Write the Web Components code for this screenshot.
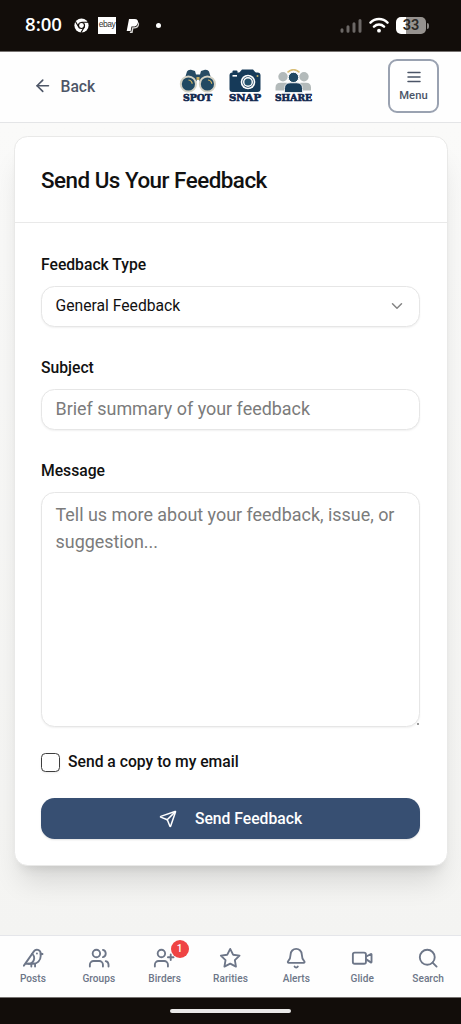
<!DOCTYPE html>
<html lang="en">
<head>
<meta charset="utf-8">
<title>Send Us Your Feedback</title>
<style>
html, body { margin: 0; height: 100%; }
body { font-family: Roboto, "Liberation Sans", sans-serif; color: #111; overflow: hidden; background: #120d0a; }
</style>
</head>
<body>
<feedback-app></feedback-app>
<script>
const define = (name, html) => {
  const t = document.createElement('template');
  t.innerHTML = html;
  customElements.define(name, class extends HTMLElement {
    constructor() {
      super();
      this.attachShadow({ mode: 'open' }).append(t.content.cloneNode(true));
    }
  });
};

const ICONS = {
  back: '<path d="m12 19-7-7 7-7"/><path d="M19 12H5"/>',
  menu: '<path d="M4 6h16M4 12h16M4 18h16"/>',
  chevron: '<path d="m6 9 6 6 6-6"/>',
  send: '<path d="M14.536 21.686a.5.5 0 0 0 .937-.024l6.5-19a.496.496 0 0 0-.635-.635l-19 6.5a.5.5 0 0 0-.024.937l7.93 3.18a2 2 0 0 1 1.112 1.11z"/><path d="m21.854 2.147-10.94 10.939"/>',
  bird: '<path d="M16 7h.01"/><path d="M3.4 18H12a8 8 0 0 0 8-8V7a4 4 0 0 0-7.28-2.3L2 20"/><path d="m20 7 2 .5-2 .5"/><path d="M10 18v3"/><path d="M14 17.75V21"/><path d="M7 18a6 6 0 0 0 3.84-10.61"/>',
  users: '<path d="M16 21v-2a4 4 0 0 0-4-4H6a4 4 0 0 0-4 4v2"/><circle cx="9" cy="7" r="4"/><path d="M22 21v-2a4 4 0 0 0-3-3.87"/><path d="M16 3.13a4 4 0 0 1 0 7.75"/>',
  userplus: '<path d="M16 21v-2a4 4 0 0 0-4-4H6a4 4 0 0 0-4 4v2"/><circle cx="9" cy="7" r="4"/><path d="M19 8v6M22 11h-6"/>',
  star: '<path d="M12 2l3.09 6.26L22 9.27l-5 4.87 1.18 6.88L12 17.77l-6.18 3.25L7 14.14 2 9.27l6.91-1.01z"/>',
  bell: '<path d="M10.268 21a2 2 0 0 0 3.464 0"/><path d="M3.262 15.326A1 1 0 0 0 4 17h16a1 1 0 0 0 .74-1.673C19.41 13.956 18 12.499 18 8A6 6 0 0 0 6 8c0 4.499-1.411 5.956-2.738 7.326"/>',
  video: '<path d="m16 13 5.223 3.482a.5.5 0 0 0 .777-.416V7.87a.5.5 0 0 0-.752-.432L16 10.5"/><rect x="2" y="6" width="14" height="12" rx="2"/>',
  search: '<circle cx="11" cy="11" r="8"/><path d="m21 21-4.3-4.3"/>'
};
customElements.define('line-icon', class extends HTMLElement {
  connectedCallback() {
    if (this.shadowRoot) return;
    this.attachShadow({ mode: 'open' }).innerHTML = `
      <style>:host{display:block;flex:none;width:var(--size,22.4px);height:var(--size,22.4px)}
      svg{display:block;width:100%;height:100%}</style>
      <svg viewBox="0 0 24 24" fill="none" stroke="currentColor" stroke-width="2" stroke-linecap="round" stroke-linejoin="round">${ICONS[this.getAttribute('name')]}</svg>`;
  }
});

define('status-bar', `
<style>
:host{display:flex;align-items:center;height:51px;box-sizing:border-box;background:#120d0a;color:#fff;padding:0 32px 0 25px;flex:none}
.time{font:600 18.6px/20px "Open Sans",Roboto,sans-serif;width:38px;white-space:nowrap;letter-spacing:0;margin-top:-3px}
svg{display:block;flex:none}
.dot{width:5px;height:5px;border-radius:50%;background:#fff;margin-left:16px}
.gap{flex:1}
.tile{background:#fff;color:#333;width:18px;height:17px;margin-left:9px;font:400 8.5px/15px "Liberation Sans",sans-serif;letter-spacing:-.5px;text-align:center}
.battery{width:30px;height:17px;border-radius:5px;background:linear-gradient(90deg,#fff 33%,#96928f 33%);color:#2c2927;font:600 14.5px/17px Roboto,sans-serif;text-align:center;margin-left:7px}
.tip{width:2px;height:6px;border-radius:0 2px 2px 0;background:#8b8784;margin-left:1px}
</style>
<span class="time">8:00</span>
<svg style="margin-left:11px" width="15" height="15" viewBox="0 0 15 15"><circle cx="7.5" cy="7.5" r="7.1" fill="#fff"/><circle cx="7.5" cy="7.5" r="3" fill="#fff" stroke="#120d0a" stroke-width="1.2"/><path d="M7.5 4.3H14M4.7 9 1.5 3.5M10.3 9 7 14.6" stroke="#120d0a" stroke-width="1.1"/></svg>
<span class="tile">ebay</span>
<svg style="margin-left:10px" width="14" height="16" viewBox="0 0 14 16"><path d="M3 1h5.5c3 0 4 1.7 3.4 4-.5 2.5-2.3 3.6-4.8 3.6H5.5L4.7 13H.7z" fill="#fff"/><path d="M12.4 4c1 .9.8 2.4.5 3.4-.6 2.1-2.2 3-4.3 3H7.4L6.6 15H3.8l.2-1.4h1.3l.9-4.4h1.7c2.6 0 4.4-1.6 4.5-5.2z" fill="#d8d6d4"/></svg>
<span class="dot"></span><span class="gap"></span>
<svg width="22" height="16" viewBox="0 0 22 16" stroke="#6b6765" stroke-width="3" stroke-linecap="round"><path d="M2 13.3v-1.5M8 13.3V8.7M14 13.3V5.7M20 13.3V2.5"/></svg>
<svg style="margin:-2px 0 0 7px" width="20" height="16" viewBox="0 0 20 16" fill="none" stroke="#fff" stroke-width="2.5" stroke-linecap="round"><path d="M1.5 5.6a12 12 0 0 1 17 0M5 9.6a7.2 7.2 0 0 1 10 0"/><circle cx="10" cy="13.7" r="1.9" fill="#fff" stroke="none"/></svg>
<span class="battery">33</span><span class="tip"></span>`);

define('brand-logo', `
<style>
:host{display:block;width:136px;height:36px}
svg{display:block} text{font:700 8.6px "DejaVu Serif","Liberation Serif",serif;fill:#12284f;stroke:#12284f;stroke-width:.6}
</style>
<svg width="136" height="36" viewBox="0 0 136 36">
  <g>
    <path d="M6 9 8 2.5Q9 .5 12 .8L16 2l1 3.5h4L22 2l4-1.2q3-.3 4 1.7l2 6.5-8 9-4-7h-2l-4 7z" fill="#274b64"/>
    <circle cx="9.4" cy="15" r="8.6" fill="#d5d2c4"/><circle cx="28.4" cy="15" r="8.6" fill="#d5d2c4"/>
    <circle cx="9.4" cy="15" r="6.6" fill="#214962"/><circle cx="28.4" cy="15" r="6.6" fill="#214962"/>
    <path d="M9.5 11q3.5.5 3.7 3.8M29 11q3.5.5 3.7 3.8" fill="none" stroke="#d8b860" stroke-width="1.2"/>
    <path d="M17.5 8h3v3h-3z" fill="#c6ae67"/>
    <text x="4" y="32.4" textLength="29" lengthAdjust="spacingAndGlyphs">SPOT</text>
  </g>
  <g>
    <rect x="50.5" y="3.5" width="31" height="19.5" rx="3" fill="#163a59"/><path d="M60 4l3-3.6h11L77 4z" fill="#163a59"/><rect x="53.5" y="1.6" width="5" height="3" rx="1" fill="#163a59"/>
    <circle cx="69" cy="13" r="7.3" fill="#fff"/><circle cx="69" cy="13" r="5.7" fill="#163a59"/><circle cx="69" cy="13" r="5" fill="#fff"/><circle cx="69" cy="13" r="3.6" fill="#24516c"/>
    <path d="M53.5 6.8H58" stroke="#fff" stroke-width="1.6"/><circle cx="78.5" cy="7" r="1" fill="#c8b169"/>
    <text x="50" y="32.4" textLength="32" lengthAdjust="spacingAndGlyphs">SNAP</text>
  </g>
  <g>
    <circle cx="104" cy="7.8" r="4.7" fill="#b3baba"/><circle cx="125" cy="7.8" r="4.7" fill="#b3baba"/>
    <path d="M96.5 21.5v-3q0-4.8 5-4.8h6q3 0 3 5v2.8zM119 21.5v-3q0-4.8 3-4.8h5q5 0 5 4.8v3z" fill="#b3baba"/>
    <path d="M108.5 3.4q6-5.6 12 0" fill="none" stroke="#d9bf79" stroke-width="1.5"/>
    <circle cx="114.5" cy="8.4" r="5.2" fill="#214962" stroke="#fff"/>
    <path d="M105.5 23.5v-4q0-5.7 6-5.7h6q6 0 6 5.7v4z" fill="#173c59" stroke="#fff" stroke-width=".8"/>
    <text x="96" y="32.4" textLength="37" lengthAdjust="spacingAndGlyphs">SHARE</text>
  </g>
</svg>`);

define('app-header', `
<style>
:host{display:flex;justify-content:space-between;align-items:center;height:72px;box-sizing:border-box;background:#fefefe;border-top:1px solid #777371;border-bottom:1px solid #e4e5e7;padding:0 22px 0 33px;flex:none}
.back{display:flex;align-items:center;gap:8px;color:#4d5667;font-size:15.7px;font-weight:500;--size:19.5px;margin-top:-2px;width:146px}
brand-logo{margin-right:auto;margin-top:-1px}
.menu{box-sizing:border-box;width:51px;height:54px;border:2px solid #9aa2b1;border-radius:9px;display:flex;flex-direction:column;align-items:center;color:#4b5567;padding-top:6.5px;gap:2.5px;font-size:11.2px;line-height:15px;font-weight:500;--size:18px;background:#fff;letter-spacing:.05px;margin-top:-2px}
</style>
<div class="back"><line-icon name="back"></line-icon><span>Back</span></div>
<brand-logo></brand-logo>
<div class="menu"><line-icon name="menu"></line-icon><span>Menu</span></div>`);

define('form-field', `
<style>
:host{display:flex;flex-direction:column;gap:12px}
.label{font-size:15.7px;line-height:18px;font-weight:500}
.box{box-sizing:border-box;min-height:41px;border:1px solid #e6e6e6;border-radius:13.5px;background:#fff;box-shadow:0 1px 2px rgba(0,0,0,.06);padding:0 13.5px 2px;display:flex;align-items:center;justify-content:space-between;font-size:15.7px;color:#111;--size:18px}
:host([placeholder]) .box{font-size:17.93px;color:#7b7b7b}
:host([multiline]) .box{height:235px;align-items:flex-start;padding-top:7.5px;line-height:27px;position:relative}
.grip{display:none}
:host([multiline]) .grip{display:block;position:absolute;right:0;bottom:1px;width:2px;height:2px;background:#999}
</style>
<div class="label"><slot name="label"></slot></div>
<div class="box"><slot></slot><i class="grip"></i></div>`);

define('check-option', `
<style>
:host{display:flex;align-items:center;gap:8.5px;font-size:15.7px;line-height:18px;font-weight:500}
i{width:18.5px;height:18.5px;box-sizing:border-box;border:1px solid #3d3d3d;border-radius:4.5px;background:#fff;box-shadow:0 1px 2px rgba(0,0,0,.08)}
</style><i></i><span><slot></slot></span>`);

define('primary-button', `
<style>
:host{display:flex;align-items:center;justify-content:center;gap:18px;height:41px;border-radius:13.5px;background:#374f72;color:#fff;font-size:15.7px;font-weight:500;--size:18px;box-shadow:0 1px 2px rgba(0,0,0,.12)}
</style><line-icon name="send"></line-icon><span><slot></slot></span>`);

define('form-card', `
<style>
:host{display:flex;flex-direction:column;box-sizing:border-box;height:730px;background:#fff;border:1px solid #e9e9e8;border-radius:13.5px;box-shadow:0 22px 28px -7px rgba(0,0,0,.12),0 9px 11px -7px rgba(0,0,0,.10)}
header{box-sizing:border-box;height:86px;padding:30px 27px 0 26.5px;border-bottom:1px solid #e9e9e9;font-size:22.4px;line-height:27px;font-weight:500;letter-spacing:-.5px}
.body{padding:33px 26.5px 0;display:flex;flex-direction:column}
</style><header><slot name="title"></slot></header><div class="body"><slot></slot></div>`);

define('feedback-form', `
<style>
:host{display:block;flex:1;box-sizing:border-box;padding:13px 13.5px 0;background:linear-gradient(#fafaf9,#f4f4f2);overflow:hidden}
form-field{margin-bottom:32px}
form-field:nth-of-type(1),form-field:nth-of-type(2){margin-bottom:32px}
form-field[multiline]{margin-bottom:26px}
check-option{margin-bottom:26.5px}
line-icon{color:#858585}
</style>
<form-card>
  <span slot="title">Send Us Your Feedback</span>
  <form-field><span slot="label">Feedback Type</span><span>General Feedback</span><line-icon name="chevron"></line-icon></form-field>
  <form-field placeholder><span slot="label">Subject</span><span>Brief summary of your feedback</span></form-field>
  <form-field placeholder multiline><span slot="label">Message</span><span>Tell us more about your feedback, issue, or suggestion...</span></form-field>
  <check-option>Send a copy to my email</check-option>
  <primary-button>Send Feedback</primary-button>
</form-card>`);

customElements.define('nav-item', class extends HTMLElement {
  connectedCallback() {
    if (this.shadowRoot) return;
    const badge = this.getAttribute('badge');
    this.attachShadow({ mode: 'open' }).innerHTML = `
    <style>
    :host{display:flex;flex:1;flex-direction:column;align-items:center;gap:3px;padding-top:11px;color:#6d7688;font-size:10.1px;line-height:13px;font-weight:500;position:relative;letter-spacing:.05px}
    b{position:absolute;left:39px;top:4px;width:18px;height:18px;border-radius:50%;background:#ef4444;color:#fff;font-size:10px;line-height:18px;font-weight:500;text-align:center}
    </style><line-icon name="${this.getAttribute('icon')}"></line-icon><span><slot></slot></span>${badge ? `<b>${badge}</b>` : ''}`;
  }
});

define('bottom-nav', `
<style>:host{display:flex;flex:none;height:62px;box-sizing:border-box;background:#fefefe;border-top:1px solid #e5e6ea}</style>
<nav-item icon="bird">Posts</nav-item><nav-item icon="users">Groups</nav-item><nav-item icon="userplus" badge="1">Birders</nav-item><nav-item icon="star">Rarities</nav-item><nav-item icon="bell">Alerts</nav-item><nav-item icon="video">Glide</nav-item><nav-item icon="search">Search</nav-item>`);

define('home-indicator', `
<style>:host{display:flex;justify-content:center;align-items:center;flex:none;height:27px;box-sizing:border-box;background:#120d0a;border-top:1px solid #777371}
i{width:121px;height:4.5px;border-radius:2.5px;background:#e9e8e7}</style><i></i>`);

define('feedback-app', `
<style>:host{display:flex;flex-direction:column;height:1024px;width:461px}</style>
<status-bar></status-bar><app-header></app-header><feedback-form></feedback-form><bottom-nav></bottom-nav><home-indicator></home-indicator>`);
</script>
</body>
</html>
